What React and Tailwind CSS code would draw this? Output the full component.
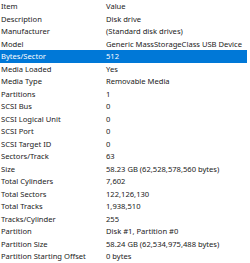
const rows = [
  ['Item', 'Value'],
  ['Description', 'Disk drive'],
  ['Manufacturer', '(Standard disk drives)'],
  ['Model', 'Generic MassStorageClass USB Device'],
  ['Bytes/Sector', '512'],
  ['Media Loaded', 'Yes'],
  ['Media Type', 'Removable Media'],
  ['Partitions', '1'],
  ['SCSI Bus', '0'],
  ['SCSI Logical Unit', '0'],
  ['SCSI Port', '0'],
  ['SCSI Target ID', '0'],
  ['Sectors/Track', '63'],
  ['Size', '58.23 GB (62,528,578,560 bytes)'],
  ['Total Cylinders', '7,602'],
  ['Total Sectors', '122,126,130'],
  ['Total Tracks', '1,938,510'],
  ['Tracks/Cylinder', '255'],
  ['Partition', 'Disk #1, Partition #0'],
  ['Partition Size', '58.24 GB (62,534,975,488 bytes)'],
  ['Partition Starting Offset', '0 bytes'],
]

export default function App() {
  return (
    <div className="w-[250px] h-[263px] bg-white overflow-hidden text-[7.6px] text-[#222] font-['Noto_Sans',sans-serif]">
      {rows.map(([item, value]) => {
        const selected = item === 'Bytes/Sector'
        return (
          <div
            key={item}
            className={
              selected
                ? 'flex h-[12.5px] leading-[12.5px] w-[247px] bg-[#0078d7] text-white'
                : 'flex h-[12.5px] leading-[12.5px]'
            }
          >
            <div className="w-[106px] pl-[1px] whitespace-nowrap">{item}</div>
            <div className="whitespace-nowrap">{value}</div>
          </div>
        )
      })}
    </div>
  )
}
